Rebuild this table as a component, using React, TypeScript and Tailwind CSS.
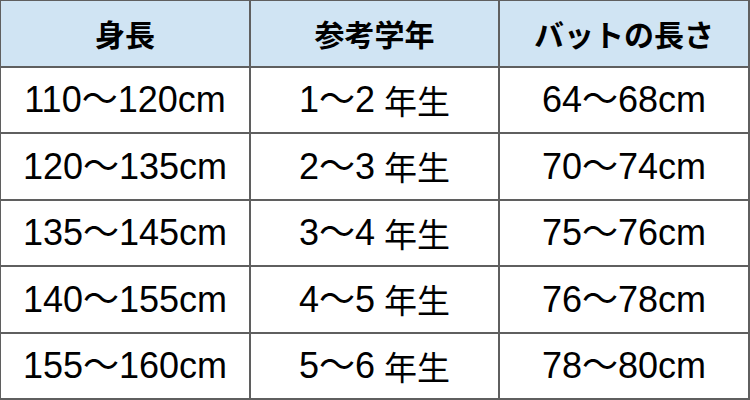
import React from 'react';

// [身長, 参考学年 (数字部分), バットの長さ]
const rows: [string, string, string][] = [
  ['110〜120cm', '1〜2', '64〜68cm'],
  ['120〜135cm', '2〜3', '70〜74cm'],
  ['135〜145cm', '3〜4', '75〜76cm'],
  ['140〜155cm', '4〜5', '76〜78cm'],
  ['155〜160cm', '5〜6', '78〜80cm'],
];

const headers = ['身長', '参考学年', 'バットの長さ'];

const bodyCell = 'bg-white flex items-center justify-center text-[36px] leading-none pt-[1px]';

export default function App() {
  return (
    <div
      className="w-[750px] h-[400px] bg-[#5f5f5f] pt-[1px] pl-[1px] pr-[2px] pb-[2px] grid grid-cols-[248px_247px_248px] grid-rows-6 gap-[2px] text-black"
      style={{ fontFamily: '"Liberation Sans", "Noto Sans CJK JP", sans-serif' }}
    >
      {headers.map((h) => (
        <div
          key={h}
          className="bg-[#d0e4f3] flex items-center justify-center text-[30px] font-bold leading-none"
          style={{ fontFamily: '"Noto Sans CJK JP", sans-serif' }}
        >
          {h}
        </div>
      ))}
      {rows.map(([height, grade, bat]) => (
        <React.Fragment key={height}>
          <div className={bodyCell}>{height}</div>
          <div className={bodyCell}>
            {grade}
            <span
              className="ml-[9px] text-[33px]"
              style={{ fontFamily: '"Noto Sans CJK JP", sans-serif' }}
            >
              年生
            </span>
          </div>
          <div className={bodyCell}>{bat}</div>
        </React.Fragment>
      ))}
    </div>
  );
}
